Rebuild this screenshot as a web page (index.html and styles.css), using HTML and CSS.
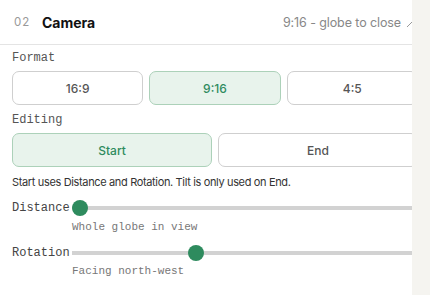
FILE: index.html
```html
<!DOCTYPE html>
<html lang="en">
<head>
    <meta charset="UTF-8">
    <meta name="viewport" content="width=device-width, initial-scale=1.0">
    <title>Camera</title>
    <link rel="stylesheet" href="styles.css">
</head>
<body>
    <div class="panel">
        <div class="inner">
            <div class="header">
                <span class="step">02</span>
                <span class="title">Camera</span>
                <span class="summary">9:16 - globe to close</span>
                <svg class="edit" width="12" height="12" viewBox="0 0 12 12">
                    <path d="M1 11 L8 4" stroke="#999" stroke-width="1" fill="none"/>
                </svg>
            </div>

            <div class="label">Format</div>
            <div class="options three">
                <button class="option">16:9</button>
                <button class="option selected">9:16</button>
                <button class="option">4:5</button>
            </div>

            <div class="label">Editing</div>
            <div class="options two">
                <button class="option selected">Start</button>
                <button class="option">End</button>
            </div>
            <p class="note">Start uses Distance and Rotation. Tilt is only used on End.</p>

            <div class="slider-row">
                <span class="slider-label">Distance</span>
                <div class="track">
                    <span class="thumb" style="left: 0%;"></span>
                </div>
            </div>
            <div class="slider-value">Whole globe in view</div>

            <div class="slider-row second">
                <span class="slider-label">Rotation</span>
                <div class="track">
                    <span class="thumb" style="left: 33.6%;"></span>
                </div>
            </div>
            <div class="slider-value last">Facing north-west</div>
        </div>
    </div>
    <div class="rail"></div>
</body>
</html>
```

FILE: styles.css
```css
body {
    margin: 0;
    display: flex;
    height: 295px;
    overflow: hidden;
    background: #f5f4f0;
    font-family: Inter, "Liberation Sans", Arial, sans-serif;
    color: #222;
}
.panel {
    width: 412px;
    flex-shrink: 0;
    background: #fff;
    overflow: hidden;
}
.rail {
    flex: 1;
    background: #f5f4f0;
}
.inner {
    width: 430px;
    padding: 0 12px;
    box-sizing: border-box;
}
.header {
    display: flex;
    align-items: center;
    height: 44px;
    border-bottom: 1px solid #e4e4e4;
    margin: 0 -12px;
    padding: 0 12px 0 14px;
}
.step {
    font-size: 11.5px;
    letter-spacing: 1px;
    color: #999;
    width: 28px;
}
.title {
    font-size: 14px;
    font-weight: 700;
    color: #111;
}
.summary {
    margin-left: auto;
    font-size: 12.5px;
    letter-spacing: -0.1px;
    color: #888;
}
.edit {
    margin-left: 5px;
}
.label {
    font-family: "Liberation Mono", "DejaVu Sans Mono", monospace;
    font-size: 12px;
    line-height: 16px;
    color: #555;
    margin-top: 5px;
}
.options {
    display: grid;
    gap: 6px;
    margin-top: 5px;
    margin-bottom: 7px;
}
.options.three {
    grid-template-columns: 1fr 1fr 1fr;
}
.options.two {
    grid-template-columns: 1fr 1fr;
    margin-bottom: 0;
}
.option {
    height: 34px;
    border: 1px solid #cfcfcf;
    border-radius: 7px;
    background: #fff;
    font-family: Inter, "Liberation Sans", Arial, sans-serif;
    font-size: 12px;
    font-weight: 500;
    color: #555;
    cursor: pointer;
}
.option.selected {
    background: #e8f3ec;
    border-color: #acd1b9;
    color: #2e8b5e;
}
.note {
    margin: 7px 0 0;
    font-size: 11px;
    letter-spacing: -0.35px;
    line-height: 16px;
    color: #333;
}
.slider-row {
    display: flex;
    align-items: center;
    height: 16px;
    margin-top: 10px;
}
.slider-row.second {
    margin-top: 11px;
}
.slider-label {
    width: 60px;
    font-family: "Liberation Mono", "DejaVu Sans Mono", monospace;
    font-size: 12px;
    color: #444;
}
.track {
    flex: 1;
    height: 4px;
    background: #d2d2d2;
    position: relative;
}
.thumb {
    position: absolute;
    top: -6px;
    width: 16px;
    height: 16px;
    border-radius: 50%;
    background: #2e8b5e;
}
.slider-value {
    margin: 4px 0 0 60px;
    font-family: "Liberation Mono", "DejaVu Sans Mono", monospace;
    font-size: 11px;
    line-height: 14px;
    color: #777;
}
.slider-value.last {
    margin-top: 3px;
}
```
